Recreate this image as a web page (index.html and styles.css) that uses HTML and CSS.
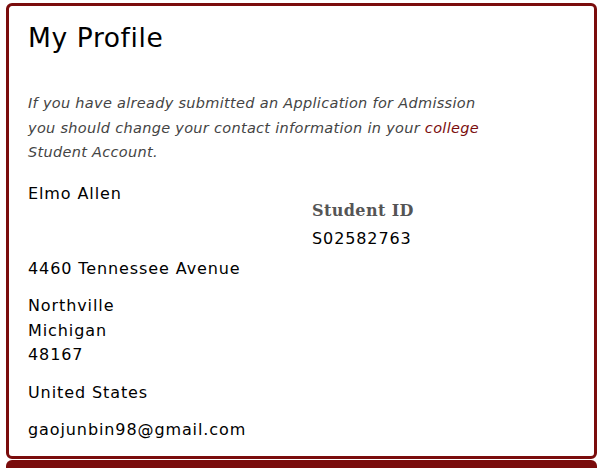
FILE: index.html
```html
<!DOCTYPE html>
<html>
<head>
<meta charset="utf-8">
<link rel="stylesheet" href="styles.css">
</head>
<body>
<div class="page">
  <section class="card">
    <h1 class="title">My Profile</h1>
    <p class="note">If you have already submitted an Application for Admission<br>you should change your contact information in your <a class="link" href="#">college</a><br>Student Account.</p>
    <div class="top-row">
      <div class="name">Elmo Allen</div>
      <div class="sid">
        <div class="sid-label">Student ID</div>
        <div class="sid-value">S02582763</div>
      </div>
    </div>
    <p class="line first">4460 Tennessee Avenue</p>
    <p class="line">Northville<br>Michigan<br>48167</p>
    <p class="line">United States</p>
    <p class="line">gaojunbin98@gmail.com</p>
  </section>
  <div class="next-card"></div>
</div>
</body>
</html>
```
FILE: styles.css
```css
html, body {
  margin: 0;
  padding: 0;
  background: #ffffff;
}
.page {
  padding: 3px 1px 0 6px;
  height: 468px;
  box-sizing: border-box;
  overflow: hidden;
  font-family: "DejaVu Sans", Verdana, sans-serif;
  color: #000;
}
.card {
  border: 3px solid #7a0c0c;
  border-radius: 6px;
  padding: 14px 19px 0 19px;
  height: 456px;
  box-sizing: border-box;
}
.title {
  margin: 0;
  font-weight: normal;
  font-size: 26.5px;
  letter-spacing: 0.6px;
  line-height: 36px;
}
.note {
  margin: 35px 0 0 0;
  font-style: italic;
  font-size: 14.5px;
  letter-spacing: 0.3px;
  line-height: 24.5px;
  color: #444;
}
.link {
  color: #7a0c0c;
  text-decoration: none;
}
.top-row {
  display: flex;
  margin-top: 17px;
  font-size: 16px;
  letter-spacing: 0.9px;
  line-height: 24px;
}
.name {
  width: 284px;
}
.sid {
  padding-top: 17px;
}
.sid-label {
  font-family: "DejaVu Serif", Georgia, serif;
  font-weight: bold;
  font-size: 16px;
  letter-spacing: 0.4px;
  color: #555;
  line-height: 24px;
}
.sid-value {
  margin-top: 4px;
}
.line {
  margin: 13px 0 0 0;
  font-size: 16px;
  letter-spacing: 0.9px;
  line-height: 24.5px;
}
.line.first {
  margin-top: 6px;
}
.next-card {
  margin-top: 1px;
  height: 20px;
  background: #7a0c0c;
  border-radius: 6px 6px 0 0;
}
```
